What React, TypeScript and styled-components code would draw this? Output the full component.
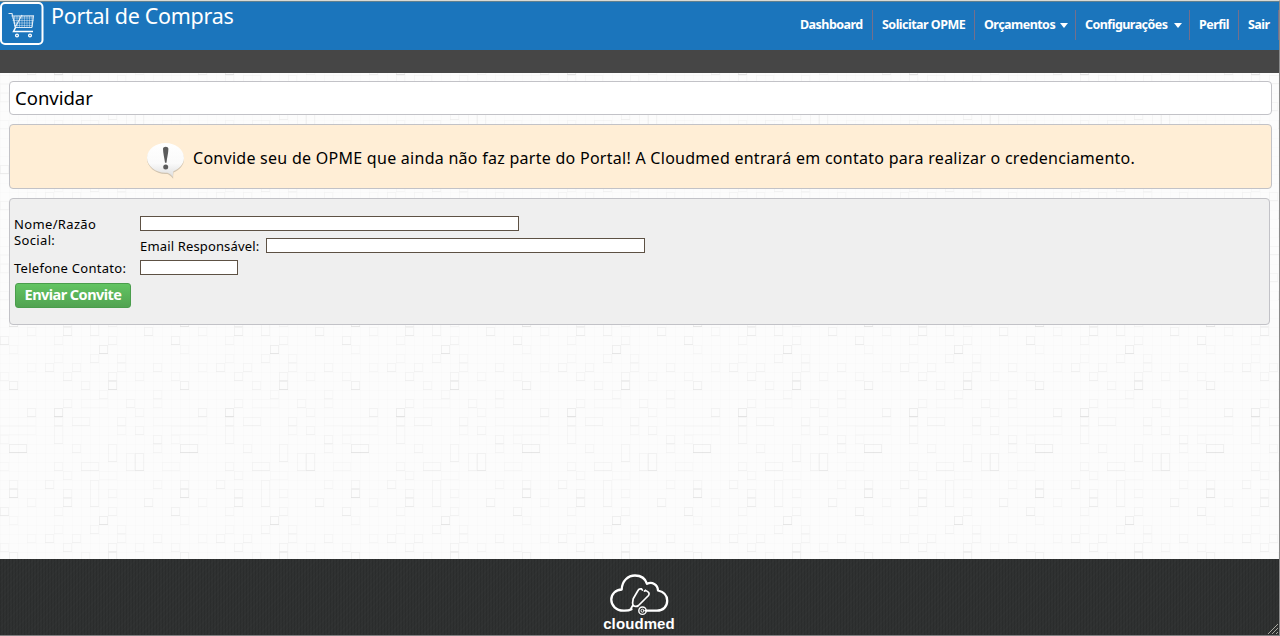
import React from "react";
import styled, { createGlobalStyle } from "styled-components";

const GlobalStyle = createGlobalStyle`
  *, *::before, *::after { box-sizing: border-box; }
  body { margin: 0; overflow: hidden; background: #fbfbfb; }
  body, input, button { font-family: "Noto Sans", "Open Sans", sans-serif; }
`;

const Page = styled.div`
  position: relative;
  isolation: isolate;
  width: 100%;
  height: 636px;
  display: flex;
  flex-direction: column;
  border-top: 1px solid #d9d9d4;
  border-right: 1px solid #8a8a8a;
  color: #000;
`;

const Texture = styled.svg`
  position: absolute;
  inset: 0;
  z-index: -1;
  width: 100%;
  height: 100%;
`;

const Header = styled.header`
  height: 49px;
  flex: none;
  display: flex;
  justify-content: space-between;
  background: #1b75bc;
  border-top: 1px solid #61808f;
`;

const Brand = styled.div`
  display: flex;
  align-items: flex-start;
`;

const BrandName = styled.span`
  margin: -1px 0 0 7px;
  font-size: 21.5px;
  line-height: 30px;
  letter-spacing: -0.3px;
  color: #fff;
  white-space: nowrap;
`;

const Nav = styled.nav`
  display: flex;
  height: 30px;
  margin-top: 8px;
`;

const NavItem = styled.a<{ $width: number }>`
  width: ${(p) => p.$width}px;
  flex: none;
  display: flex;
  align-items: center;
  padding: 0 0 1px 9px;
  border-right: 1px solid #746f8c;
  font-size: 12.5px;
  font-weight: 700;
  letter-spacing: -0.53px;
  color: #fff;
  white-space: nowrap;
`;

const Caret = styled.i`
  margin: 2px 7px 0 auto;
  border: 4px solid transparent;
  border-top: 5px solid #fff;
  border-bottom: 0;
`;

const SubBar = styled.div`
  height: 23px;
  flex: none;
  background: #464646;
`;

const Main = styled.main`
  flex: 1;
  display: flex;
  flex-direction: column;
  padding: 8px 7px 0 9px;
`;

const Panel = styled.section`
  border: 1px solid #c2c2c7;
  border-radius: 4px;
`;

const TitlePanel = styled(Panel)`
  height: 34px;
  padding-left: 5px;
  background: #fff;
`;

const Title = styled.h1`
  margin: 0;
  font-size: 18.5px;
  font-weight: 400;
  line-height: 31px;
`;

const Notice = styled(Panel)`
  height: 65px;
  margin-top: 9px;
  padding: 15px 0 0 135px;
  display: flex;
  align-items: flex-start;
  background: #ffeed6;
`;

const NoticeText = styled.p`
  margin: 6px 0 0 8px;
  font-size: 16px;
  line-height: 24px;
  letter-spacing: 0.27px;
  white-space: nowrap;
`;

const FormPanel = styled(Panel)`
  height: 127px;
  margin: 9px 2px 0 0;
  padding: 17px 4px 0;
  background: #efefef;
`;

const Fields = styled.div`
  display: grid;
  grid-template-columns: 126px 1fr;
  grid-template-rows: 22px 22px 22px;
`;

const Label = styled.label<{ $rows?: number; $track?: number }>`
  grid-row: span ${(p) => p.$rows ?? 1};
  font-size: 13px;
  line-height: 16px;
  letter-spacing: ${(p) => p.$track ?? 0.27}px;
`;

const Cell = styled.div`
  display: grid;
  grid-template-columns: auto auto;
  justify-content: start;
  align-items: start;
  white-space: nowrap;
`;

const EmailCell = styled(Cell)`
  grid-template-columns: 126px auto;
`;

const Input = styled.input<{ $width: number }>`
  width: ${(p) => p.$width}px;
  height: 15px;
  margin: 0;
  padding: 0 2px;
  border: 1px solid #5d5144;
  border-radius: 0;
  background: #fff;
  outline: 0;
  font-size: 11px;
`;

const Submit = styled.button`
  width: 116px;
  height: 25px;
  display: block;
  margin: 1px 0 0 1px;
  padding: 0 0 3px;
  border: 1px solid #4a9d4c;
  border-radius: 3px;
  background: linear-gradient(#62c462, #51a351);
  color: #fff;
  font-size: 14.5px;
  font-weight: 700;
  line-height: 20px;
  letter-spacing: -0.55px;
  white-space: nowrap;
`;

const Footer = styled.footer`
  position: relative;
  height: 77px;
  flex: none;
  display: flex;
  flex-direction: column;
  align-items: center;
  padding: 15px 1px 0 0;
  background:
    repeating-linear-gradient(90deg, rgba(0, 0, 0, 0.1) 0 1px, transparent 1px 3px),
    repeating-linear-gradient(135deg, rgba(255, 255, 255, 0.01) 0 1px, transparent 1px 4px),
    #2f3131;
  border-bottom: 1px solid #827e80;
`;

const FooterName = styled.span`
  margin-top: -3px;
  font-family: "Liberation Sans", Arial, sans-serif;
  font-size: 15px;
  font-weight: 700;
  line-height: 17px;
  letter-spacing: 0.1px;
  color: #fff;
`;

const Grip = styled.svg`
  position: absolute;
  right: 0;
  bottom: 0;
`;

/* [column, row, columns, rows, opacity] on a 19 x 19 grid of 9px squares */
const squares: number[][] = [
  [4, 0, 1, 1, 0.07], [7, 0, 1, 1, 0.14], [15, 0, 1, 1, 0.12], [6, 1, 1, 1, 0.05], [12, 1, 1, 1, 0.05],
  [2, 2, 1, 1, 0.07], [9, 2, 1, 1, 0.07], [4, 2, 3, 1, 0.03], [12, 2, 1, 1, 0.04], [1, 3, 1, 1, 0.17],
  [17, 3, 1, 1, 0.09], [10, 3, 1, 1, 0.05], [1, 4, 1, 1, 0.07], [3, 4, 2, 1, 0.06], [8, 4, 1, 1, 0.06],
  [12, 4, 6, 1, 0.03], [1, 5, 1, 2, 0.06], [8, 5, 1, 1, 0.04], [10, 5, 1, 1, 0.07], [14, 5, 4, 1, 0.03],
  [12, 6, 1, 1, 0.08], [14, 6, 1, 1, 0.04], [3, 7, 1, 1, 0.06], [15, 7, 2, 1, 0.14], [12, 7, 1, 1, 0.05],
  [7, 7, 1, 2, 0.08], [9, 8, 1, 2, 0.07], [10, 8, 1, 2, 0.12], [4, 9, 2, 1, 0.08], [1, 9, 1, 1, 0.06],
  [13, 9, 2, 1, 0.04], [2, 10, 1, 1, 0.05], [6, 10, 2, 1, 0.03], [0, 11, 1, 1, 0.08], [5, 11, 1, 3, 0.08],
  [15, 11, 1, 1, 0.08], [12, 11, 1, 1, 0.05], [2, 12, 1, 1, 0.08], [15, 12, 1, 1, 0.15], [7, 12, 1, 1, 0.05],
  [2, 13, 1, 1, 0.1], [11, 13, 1, 1, 0.09], [17, 13, 1, 1, 0.05], [14, 14, 1, 1, 0.11], [1, 14, 1, 1, 0.05],
  [7, 14, 1, 1, 0.06], [6, 15, 1, 1, 0.15], [15, 15, 1, 1, 0.04], [5, 16, 1, 1, 0.07], [8, 16, 1, 1, 0.05],
  [1, 16, 1, 1, 0.04], [0, 17, 1, 1, 0.08], [3, 17, 1, 1, 0.07], [12, 17, 1, 1, 0.07], [8, 17, 1, 1, 0.05],
  [2, 18, 1, 1, 0.08], [7, 18, 1, 1, 0.09], [10, 18, 1, 1, 0.05], [14, 18, 1, 1, 0.05], [17, 17, 1, 1, 0.04],
];

function PaperTexture() {
  return (
    <Texture aria-hidden="true">
      <defs>
        <pattern id="grid" width="9" height="9" patternUnits="userSpaceOnUse" patternTransform="translate(0 2)">
          <path d="M.5 0v9M0 .5h9" stroke="#000" strokeOpacity=".008" fill="none" />
        </pattern>
        <pattern id="squares" width="171" height="171" patternUnits="userSpaceOnUse" patternTransform="translate(900 380)">
          {squares.map(([x, y, w, h, o], i) => (
            <g key={i}>
              <rect x={x * 9 + 0.5} y={y * 9 + 0.5} width={w * 9 - 1} height={h * 9 - 1} fill="none" stroke="#000" strokeOpacity={o * 0.3} />
              <path d={`M${x * 9} ${(y + h) * 9 - 0.5}h${w * 9}`} stroke="#000" strokeOpacity={o * 0.3} />
            </g>
          ))}
        </pattern>
      </defs>
      <rect width="100%" height="100%" fill="#fcfcfc" />
      <rect width="100%" height="100%" fill="url(#grid)" />
      <rect width="100%" height="100%" fill="url(#squares)" />
    </Texture>
  );
}

function CartLogo() {
  return (
    <svg width="44" height="44" viewBox="0 1 44 44" fill="none" stroke="#fff">
      <rect x="1" y="2" width="41.5" height="41" rx="4" strokeWidth="2" />
      <g stroke="#fff" strokeOpacity=".5" strokeWidth=".8">
        <path d="M12 17h21M12.500 19.500h21M13 22h20M14 24.500h18" />
        <path d="M14.500 15v11M17 15v11M19.500 15v11M22 15v11M24.500 15v11M27 15v11M29.500 15v11M32 15v11" />
      </g>
      <path d="M8.500 12.500h3.500l3.500 14h16.500M11.500 15l22-.3-1.500 11.800M22 14l-7 12.500" strokeWidth="1.100" strokeOpacity=".85" />
      <path d="M15.500 26.500l-2 4H33" strokeWidth="1.500" />
      <circle cx="17" cy="34.500" r="1.400" strokeWidth="1.300" />
      <circle cx="30" cy="34.500" r="1.400" strokeWidth="1.300" />
    </svg>
  );
}

function AlertBubble() {
  return (
    <svg width="40" height="40" viewBox="0.5 0 39 40">
      <defs>
        <linearGradient id="bubble" x1="0" y1="0" x2="0" y2="1">
          <stop offset="0" stopColor="#fff" />
          <stop offset=".6" stopColor="#fafafa" />
          <stop offset="1" stopColor="#dedede" />
        </linearGradient>
      </defs>
      <path d="M20.500 4C10.500 4 2 10.600 2 18.700s8.500 15.200 18.500 15.200l2 0c2 .6 3.500 2.400 5.700 4.800-.2-2.300 0-4 .3-6.200 6-2.500 10.500-7.500 10.500-13.300C39 10.600 30.500 4 20.500 4z" fill="#a49a8a" fillOpacity=".5" />
      <path d="M20.500 3C10.500 3 2 9.600 2 17.700s8.500 15 18.500 15l2 0c2 .6 3.500 2.200 5.500 4.300-.2-2.300 0-3.500.4-5.700 6-2.500 10.600-7.500 10.600-13.300C39 9.600 30.500 3 20.500 3z" fill="url(#bubble)" />
      <path d="M18 8.800c0-2.700 5.400-2.700 5.400 0 0 4-1.400 9-1.900 14h-1.500c-.6-5-2-10-2-14z" fill="#5b5b5b" />
      <circle cx="20.700" cy="27" r="2.500" fill="#5b5b5b" />
    </svg>
  );
}

function CloudLogo() {
  return (
    <svg width="60" height="44" viewBox="0 0 60 44" fill="none" stroke="#fff" strokeLinecap="round" strokeLinejoin="round">
      <path d="M22.500 35.200c-2.500 1.500-5 1.600-8 1.500C7 36.500 2.300 31.500 2.300 25.800c0-6 4.400-10 10.400-10.300C13 7 19 1.500 26 1.500c6 0 10.400 3.300 12 8.300 5-2.500 10.700.5 11 6.700 5.500 1.200 9.200 5 9.200 10.200 0 5.800-4 10-10.200 10H37" strokeWidth="2.300" />
      <circle cx="33.500" cy="36.700" r="3.700" strokeWidth="1.400" />
      <circle cx="33.500" cy="36.700" r="1.500" strokeWidth="1" />
      <path d="M22 34.500l2-3.500c-.8-2-.3-4 .2-6.200L29 16.500c.8-1.600 2-2 3.500-1.500M36.500 16.500c3.400 1.200 4.400 3 3 5L29.500 31.500c-1.600 1.400-4.500 1.300-5.500-.5" strokeWidth="1.700" />
      <path d="M32.500 15l.8 1M36.500 16.500l-1 .5" strokeWidth="1.700" />
    </svg>
  );
}

export default function App() {
  return (
    <>
      <GlobalStyle />
      <Page>
        <PaperTexture />
        <Header>
          <Brand>
            <CartLogo />
            <BrandName>Portal de Compras</BrandName>
          </Brand>
          <Nav>
            <NavItem $width={82}>Dashboard</NavItem>
            <NavItem $width={102}>Solicitar OPME</NavItem>
            <NavItem $width={101}>Orçamentos<Caret /></NavItem>
            <NavItem $width={114}>Configurações<Caret /></NavItem>
            <NavItem $width={49}>Perfil</NavItem>
            <NavItem $width={40}>Sair</NavItem>
          </Nav>
        </Header>
        <SubBar />
        <Main>
          <TitlePanel>
            <Title>Convidar</Title>
          </TitlePanel>
          <Notice>
            <AlertBubble />
            <NoticeText>
              Convide seu de OPME que ainda não faz parte do Portal! A Cloudmed entrará em contato para realizar o credenciamento.
            </NoticeText>
          </Notice>
          <FormPanel>
            <Fields>
              <Label $rows={2} $track={0.35} htmlFor="nome">Nome/Razão<br />Social:</Label>
              <Cell><Input id="nome" $width={379} /></Cell>
              <EmailCell>
                <Label $track={0.15} htmlFor="email">Email Responsável:</Label>
                <Input id="email" $width={379} />
              </EmailCell>
              <Label htmlFor="telefone">Telefone Contato:</Label>
              <Cell><Input id="telefone" $width={98} /></Cell>
            </Fields>
            <Submit type="button">Enviar Convite</Submit>
          </FormPanel>
        </Main>
        <Footer>
          <CloudLogo />
          <FooterName>cloudmed</FooterName>
          <Grip width="12" height="12" viewBox="0 0 12 12" stroke="#a8a8a0" strokeWidth="1">
            <path d="M1 11L11 1M5 11l6-6M9 11l2-2" />
          </Grip>
        </Footer>
      </Page>
    </>
  );
}
